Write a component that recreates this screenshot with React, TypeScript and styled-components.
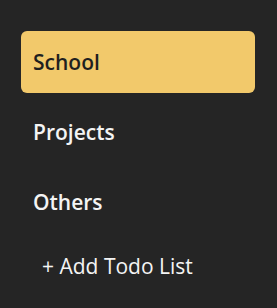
import React from 'react';
import styled, { createGlobalStyle } from 'styled-components';

const GlobalStyle = createGlobalStyle`
  html, body {
    margin: 0;
    padding: 0;
    background: #252525;
  }
  body {
    font-family: 'Open Sans', 'Noto Sans', sans-serif;
  }
`;

// Sidebar holding the todo lists
const Sidebar = styled.nav`
  display: flex;
  flex-direction: column;
  gap: 8px;
  padding: 31px 22px 0 21px;
`;

const ListItem = styled.div<{ $active?: boolean }>`
  display: flex;
  align-items: center;
  height: 62px;
  padding: 0 12px;
  border-radius: 6px;
  background: ${({ $active }) => ($active ? '#f2c96b' : 'transparent')};
  color: ${({ $active }) => ($active ? '#1f1f1f' : '#f4f4f4')};
  font-size: 21px;
  font-weight: 600;
`;

const AddButton = styled.button`
  display: flex;
  align-items: center;
  height: 50px;
  padding: 0 21px;
  border: none;
  background: transparent;
  color: #f4f4f4;
  font-family: inherit;
  font-size: 21px;
  font-weight: 400;
  text-align: left;
  cursor: pointer;
`;

const lists = ['School', 'Projects', 'Others'];

export default function App(): JSX.Element {
  return (
    <>
      <GlobalStyle />
      <Sidebar>
        {lists.map((name, i) => (
          <ListItem key={name} $active={i === 0}>
            {name}
          </ListItem>
        ))}
        <AddButton>+ Add Todo List</AddButton>
      </Sidebar>
    </>
  );
}
